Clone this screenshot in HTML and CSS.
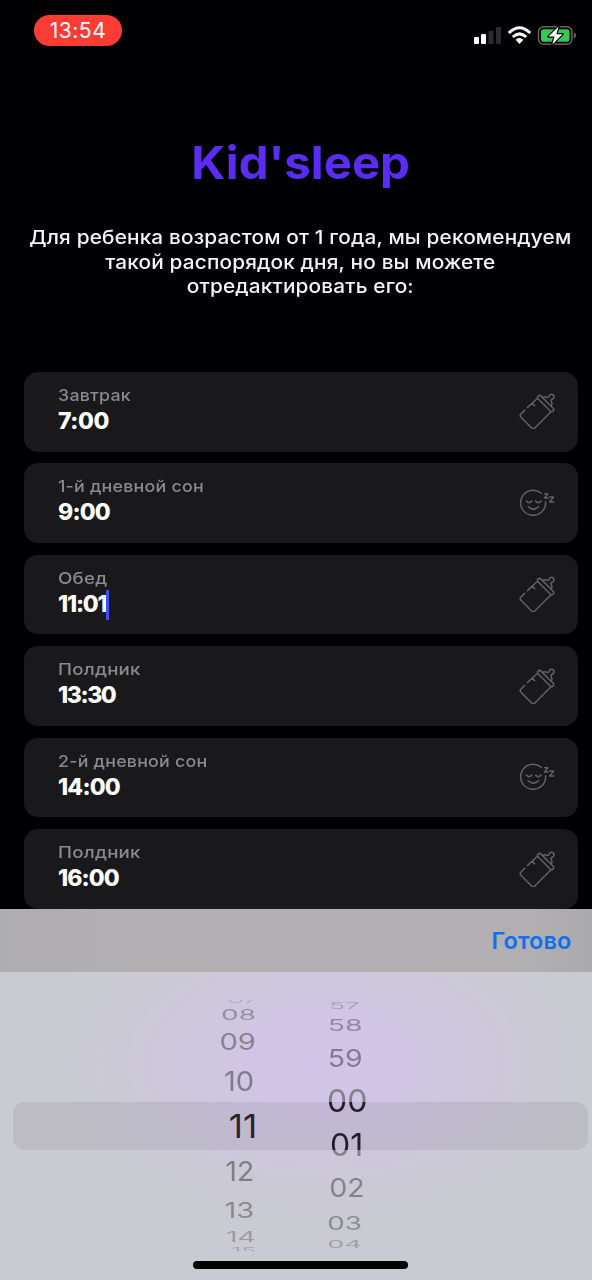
FILE: index.html
```html
<!DOCTYPE html>
<html lang="ru">
<head>
<meta charset="utf-8">
<title>Kid'sleep</title>
<link rel="stylesheet" href="styles.css">
</head>
<body>
<svg class="defs" width="0" height="0">
  <symbol id="bottle" viewBox="0 0 36 36">
    <path d="M5.600 17.400L1.800 21.200Q.5 22.600 1.800 24L12.600 35Q14.200 36.400 15.800 35L32 18.800M8.400 14.600L17.400 6.200Q18.300 5.400 19 5.800M13.200 10.300L15.700 12.800"/>
    <path d="M19 3.100Q20.600 1.700 22 3.100L34.200 15.300Q35.400 16.900 34 18.100Q32.600 19.300 31.200 18L19 5.800Q17.800 4.400 19 3.100Z"/>
    <path d="M23.800 4.500Q26 3.400 28 4.200Q29.600 4.900 29.900 3.400Q30.500 1.200 32.600 1.300Q34.900 1.600 35 3.900Q34.900 6 32.900 6.400Q31.500 6.700 32.200 8.100Q33.500 10.600 32.300 13"/>
  </symbol>
  <symbol id="sleep" viewBox="0 0 36 36">
    <path d="M22.300 8.300A12.500 12.500 0 1 0 26.600 16.700M7.400 16Q10 19.400 12.800 16M16.600 16Q19.400 19.400 22 16M9.200 21.800Q14.400 26.400 19.600 21.800"/>
    <path d="M25.600 8.800H28.800L25.600 13H29M30.600 12.100H34.500L30.600 17.100H34.800"/>
  </symbol>
</svg>
<div class="screen">
  <header class="status">
    <span class="clock">13:54</span>
    <svg class="indicators" viewBox="0 0 104 22">
      <g fill="#fff"><rect x="2" y="13" width="5" height="7" rx="1"/><rect x="9" y="10" width="5" height="10" rx="1"/></g>
      <g fill="#2c2b2e"><rect x="16.500" y="7" width="5" height="13" rx="1"/><rect x="24" y="3" width="5" height="17" rx="1"/></g>
      <g fill="none" stroke="#fff" stroke-width="3"><path d="M36.800 9Q47.500-1.500 58.200 9"/><path d="M40.800 13Q47.500 6.600 54.200 13"/></g>
      <path d="M43.600 15.800Q47.500 12.400 51.400 15.800L47.500 20Z" fill="#fff"/>
      <rect x="66.500" y="2.800" width="33.500" height="17.400" rx="5" fill="none" stroke="#656467" stroke-width="1.500"/>
      <rect x="69" y="5.300" width="28.500" height="12.400" rx="2.800" fill="#34c94f"/>
      <path d="M101.800 8.500Q104 9.200 104 11.500T101.800 14.500Z" fill="#656467"/>
      <path d="M86.600 2.500L76.500 12.600H82.600L80.300 20.400L90.500 10.200H84.300Z" fill="#fff" stroke="#000" stroke-width="2.400" paint-order="stroke" stroke-linejoin="round"/>
    </svg>
  </header>
  <main>
    <h1>Kid'sleep</h1>
    <p class="intro">Для ребенка возрастом от 1 года, мы рекомендуем<br>такой распорядок дня, но вы можете<br>отредактировать его:</p>
    <section class="cards">
      <article class="card"><div><div class="label">Завтрак</div><div class="time t700">7:00</div></div><svg class="icon"><use href="#bottle"/></svg></article>
      <article class="card"><div><div class="label">1-й дневной сон</div><div class="time t900">9:00</div></div><svg class="icon"><use href="#sleep"/></svg></article>
      <article class="card"><div><div class="label wide">Обед</div><div class="time t1101">11:01<i class="caret"></i></div></div><svg class="icon"><use href="#bottle"/></svg></article>
      <article class="card"><div><div class="label wide">Полдник</div><div class="time t1330">13:30</div></div><svg class="icon"><use href="#bottle"/></svg></article>
      <article class="card"><div><div class="label">2-й дневной сон</div><div class="time t1400">14:00</div></div><svg class="icon"><use href="#sleep"/></svg></article>
      <article class="card"><div><div class="label wide">Полдник</div><div class="time t1600">16:00</div></div><svg class="icon"><use href="#bottle"/></svg></article>
    </section>
  </main>
  <footer class="keyboard">
    <div class="toolbar"><span class="done">Готово</span></div>
    <div class="picker">
      <div class="selection"></div>
      <div class="wheels">
        <div class="wheel hours">
          <div class="tick edge" style="--gap:28px;--x:3px;--sx:.8;--sy:.22;--a:.2"><span>07</span></div>
          <div class="tick" style="--gap:15px;--x:0px;--sx:.85;--sy:.42;--a:.32"><span>08</span></div>
          <div class="tick" style="--gap:27.500px;--x:-1px;--sx:.88;--sy:.69;--a:.42"><span>09</span></div>
          <div class="tick" style="--gap:39px;--x:0px;--sx:.88;--sy:.83;--a:.44"><span>10</span></div>
          <div class="tick" style="--gap:45px;--x:3.500px;--sx:1.06;--sy:1;--a:.95"><span>11</span></div>
          <div class="tick" style="--gap:45px;--x:1px;--sx:.87;--sy:.83;--a:.44"><span>12</span></div>
          <div class="tick" style="--gap:38.500px;--x:.5px;--sx:.88;--sy:.66;--a:.38"><span>13</span></div>
          <div class="tick" style="--gap:27.500px;--x:1.500px;--sx:.86;--sy:.42;--a:.28"><span>14</span></div>
          <div class="tick edge low" style="--gap:14px;--x:5px;--sx:.75;--sy:.26;--a:.2"><span>15</span></div>
        </div>
        <div class="wheel minutes">
          <div class="tick" style="--gap:34.500px;--x:-1px;--sx:.8;--sy:.25;--a:.22"><span>57</span></div>
          <div class="tick" style="--gap:19px;--x:0px;--sx:.86;--sy:.5;--a:.36"><span>58</span></div>
          <div class="tick" style="--gap:33px;--x:0px;--sx:.86;--sy:.73;--a:.43"><span>59</span></div>
          <div class="tick split-top" style="--gap:42.700px;--x:2.500px;--sx:.97;--sy:.95;--a:1"><span>00</span></div>
          <div class="tick split-bottom" style="--gap:44px;--x:1.500px;--sx:.97;--sy:.95;--a:1"><span>01</span></div>
          <div class="tick" style="--gap:43.600px;--x:1.500px;--sx:.86;--sy:.78;--a:.43"><span>02</span></div>
          <div class="tick" style="--gap:34.400px;--x:0px;--sx:.84;--sy:.56;--a:.36"><span>03</span></div>
          <div class="tick" style="--gap:21.800px;--x:-.5px;--sx:.82;--sy:.32;--a:.25"><span>04</span></div>
        </div>
      </div>
      <div class="home"></div>
    </div>
  </footer>
</div>
</body>
</html>
```
FILE: styles.css
```css
* { box-sizing: border-box; }
body { margin: 0; background: #000002; font-family: Inter, "Open Sans", sans-serif; color: #fff; }
.defs { position: absolute; }
.screen { width: 592px; height: 1280px; overflow: hidden; display: flex; flex-direction: column; }
.status { height: 60px; flex: none; display: flex; justify-content: space-between; align-items: flex-start; padding: 14.500px 16px 0 34px; }
.clock { width: 88px; height: 31px; border-radius: 15.500px; background: #fe3c36; font-size: 21px; font-weight: 400; line-height: 32px; text-align: center; letter-spacing: .5px; }
.indicators { width: 104px; height: 22px; margin-top: 9.500px; }
main { height: 849px; flex: none; overflow: hidden; }
h1 { margin: 75px 0 0; padding-left: 9px; text-align: center; font-size: 45.500px; line-height: 56px; font-weight: 700; color: #5b2cf6; letter-spacing: 0; transform: scaleX(1.042); }
.intro { margin: 34.300px 0 0; padding-left: 8px; text-align: center; font-size: 19.200px; line-height: 24.300px; font-weight: 500; white-space: nowrap; color: #f4f4f4; letter-spacing: .15px; transform: scaleX(1.083); }
.cards { margin-top: 73.700px; padding: 0 14.500px 0 23.500px; display: grid; gap: 11.750px; }
.card { height: 79.700px; border-radius: 14px; background: #19181b; display: flex; justify-content: space-between; align-items: flex-start; padding: 13px 23px 0 34.500px; }
.label { font-size: 16.500px; line-height: 21px; font-weight: 500; color: #8a898c; letter-spacing: .2px; transform: scaleX(1.08); transform-origin: left; }
.wide { transform: scaleX(1.135); }
.time { font-size: 23px; line-height: 29px; font-weight: 800; margin-top: 1px; display: flex; align-items: center; }
.t700 { letter-spacing: -.4px; }
.t900 { letter-spacing: -.8px; }
.t1101 { letter-spacing: -1.200px; }
.t1330 { letter-spacing: -1.400px; }
.t1400 { letter-spacing: -.8px; }
.t1600 { letter-spacing: -.9px; }
.caret { width: 3px; height: 30px; background: #3f50f2; margin: 0 -3px 0 0; }
.icon { width: 36px; height: 36px; margin-top: 8.500px; fill: none; stroke: #626164; stroke-width: 1.500; stroke-linecap: round; stroke-linejoin: round; }
.keyboard { flex: 1; display: flex; flex-direction: column; }
.toolbar { height: 62.500px; flex: none; background: linear-gradient(90deg, #aeadb2, #b2afb3 20%, #b1afb2 90%, #aaa9ac); display: flex; align-items: center; justify-content: flex-end; padding-right: 20.500px; }
.done { color: #0d70ed; font-size: 23.500px; font-weight: 600; letter-spacing: .1px; }
.picker { flex: 1; display: grid; background: radial-gradient(ellipse 260px 155px at 325px 90px, #d2c5e8 0, #d1c5e5 28%, #cec7de 50%, #cbc9d6 80%, #cacad2 100%); }
.picker > * { grid-area: 1 / 1; }
.selection { height: 48px; margin: 130.500px 4px 0 13px; border-radius: 12px; background: rgba(115, 110, 130, .15); }
.wheels { display: flex; height: 283px; }
.wheel { width: 106px; padding-top: 28px; }
.hours { margin-left: 186px; }
.minutes { padding-top: 34.500px; }
.tick { --ink: rgb(28 28 32 / var(--a)); height: 0; margin-top: var(--gap); display: flex; align-items: center; justify-content: center; font-size: 33px; line-height: 40px; color: var(--ink); }
.wheel .tick:first-child { margin-top: 0; }
.tick span { transform: translateX(var(--x)) scale(var(--sx), var(--sy)); }
.edge span { clip-path: inset(52% 0 0 0); }
.low span { clip-path: inset(0 0 46% 0); }
.split-top span, .split-bottom span { color: transparent; background-clip: text; -webkit-background-clip: text; }
.split-top span { background-image: linear-gradient(#827d8e 53%, #211e28 53%); }
.split-bottom span { background-image: linear-gradient(#211e28 64%, #85828d 64%); }
.home { align-self: end; width: 215px; height: 8px; margin: 0 0 11px 193px; border-radius: 4px; background: #000; }
```
